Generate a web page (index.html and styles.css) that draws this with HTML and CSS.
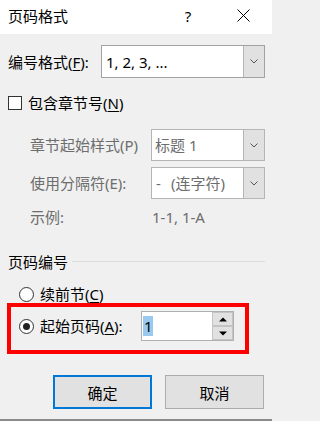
FILE: index.html
```html
<!DOCTYPE html>
<html lang="zh-CN">
<head>
<meta charset="utf-8">
<title>页码格式</title>
<link rel="stylesheet" href="styles.css">
</head>
<body>
<div class="dialog">
  <header class="titlebar">
    <span class="title">页码格式</span>
    <span class="help">?</span>
    <span class="close">
      <svg width="13" height="13" viewBox="0 0 13 13"><path d="M0.5 0.5 L12.5 12.5 M12.5 0.5 L0.5 12.5" stroke="#000" stroke-width="1" fill="none"/></svg>
    </span>
  </header>

  <main class="content">
    <div class="row row-format">
      <span class="label label-main">编号格式(<u>F</u>):</span>
      <div class="select select-main">
        <span class="select-text">1, 2, 3, ...</span>
        <span class="drop"><svg width="8" height="5" viewBox="0 0 8 5"><path d="M0.5 0.5 L4 4 L7.5 0.5" stroke="#555" fill="none"/></svg></span>
      </div>
    </div>

    <div class="row row-check">
      <span class="checkbox"></span>
      <span class="check-label">包含章节号(<u>N</u>)</span>
    </div>

    <div class="row row-sub row-sub1">
      <span class="label label-sub disabled">章节起始样式(P)</span>
      <div class="select select-sub">
        <span class="select-text disabled">标题 1</span>
        <span class="drop"><svg width="8" height="5" viewBox="0 0 8 5"><path d="M0.5 0.5 L4 4 L7.5 0.5" stroke="#555" fill="none"/></svg></span>
      </div>
    </div>

    <div class="row row-sub row-sub2">
      <span class="label label-sub disabled">使用分隔符(E):</span>
      <div class="select select-sub">
        <span class="select-text disabled"><span class="dash">-</span>(连字符)</span>
        <span class="drop"><svg width="8" height="5" viewBox="0 0 8 5"><path d="M0.5 0.5 L4 4 L7.5 0.5" stroke="#555" fill="none"/></svg></span>
      </div>
    </div>

    <div class="row row-example">
      <span class="label label-sub disabled">示例:</span>
      <span class="example disabled">1-1, 1-A</span>
    </div>

    <div class="row group-head">
      <span class="group-title">页码编号</span>
      <span class="group-line"></span>
    </div>

    <div class="row row-radio1">
      <span class="radio"></span>
      <span class="radio-label">续前节(<u>C</u>)</span>
    </div>

    <div class="highlight">
      <div class="row row-radio2">
        <span class="radio checked"></span>
        <span class="radio-label label-start">起始页码(<u>A</u>):</span>
        <div class="spin">
          <span class="spin-text"><span class="sel">1</span></span>
          <span class="spin-btns">
            <span class="spin-btn"><svg width="8" height="5" viewBox="0 0 8 5"><path d="M0 4.5 L4 0.5 L8 4.5 Z" fill="#000"/></svg></span>
            <span class="spin-btn"><svg width="8" height="5" viewBox="0 0 8 5"><path d="M0 0.5 L4 4.5 L8 0.5 Z" fill="#000"/></svg></span>
          </span>
        </div>
      </div>
    </div>

    <div class="buttons">
      <span class="btn btn-default">确定</span>
      <span class="btn">取消</span>
    </div>
  </main>
  <div class="bottom-line"></div>
</div>
</body>
</html>
```
FILE: styles.css
```css
* { box-sizing: border-box; }

html, body {
  margin: 0;
  padding: 0;
}

body {
  width: 272px;
  height: 421px;
  overflow: hidden;
  background: #f0f0f0;
  font-family: "Noto Sans", "Noto Sans CJK SC", sans-serif;
  font-size: 15px;
  color: #000;
}

.dialog {
  width: 272px;
  height: 421px;
  display: flex;
  flex-direction: column;
}

u { text-decoration: underline; text-underline-offset: 2px; text-decoration-thickness: 1px; }

.titlebar {
  height: 34px;
  background: #fff;
  display: flex;
  align-items: center;
  padding-left: 8px;
  line-height: 20px;
}

.title { flex: 1; margin-top: -2px; }

.help {
  width: 20px;
  text-align: center;
  margin-right: 39px;
  margin-top: -2px;
}

.close {
  width: 13px;
  height: 13px;
  margin-right: 22px;
  margin-top: -3px;
  display: flex;
}

.content {
  padding: 0 7px 0 8px;
  display: flex;
  flex-direction: column;
}

.row {
  display: flex;
  align-items: center;
  line-height: 20px;
}

.disabled { color: #6d6d6d; }

.row-format { margin-top: 11px; height: 33px; }

.label-main { width: 93px; }

.select {
  display: flex;
  align-items: stretch;
  background: #fff;
  border: 1px solid #a2a2a2;
}

.select-main { width: 164px; height: 33px; }

.select-sub { width: 114px; height: 32px; border-color: #b5b5b5; }

.select-text {
  flex: 1;
  display: flex;
  align-items: center;
  padding-left: 4px;
  white-space: pre;
}

.select-sub .select-text { padding-left: 3px; }

.dash { width: 16px; padding-left: 1px; }

.drop {
  width: 21px;
  background: #e1e1e1;
  border-left: 1px solid #b5b5b5;
  display: flex;
  align-items: center;
  justify-content: center;
}

.row-check { margin-top: 13px; height: 24px; }

.checkbox {
  width: 14px;
  height: 14px;
  border: 1px solid #333;
  background: #fff;
  margin-right: 6px;
}

.row-sub1 { margin-top: 14px; height: 32px; }
.row-sub2 { margin-top: 6px; height: 32px; }

.label-sub { width: 143px; padding-left: 22px; }

.row-example { margin-top: 8px; height: 20px; }
.example { padding-left: 1px; }

.group-head { margin-top: 25px; height: 20px; }
.group-title { margin-right: 4px; }
.group-line { flex: 1; height: 1px; background: #dcdcdc; margin-top: -2px; }

.row-radio1 { margin-top: 13px; height: 18px; padding-left: 11px; }

.radio {
  width: 15px;
  height: 15px;
  border: 1px solid #333;
  border-radius: 50%;
  background: #fff;
  margin-right: 6px;
  display: flex;
  align-items: center;
  justify-content: center;
}

.radio.checked::after {
  content: "";
  width: 7px;
  height: 7px;
  border-radius: 50%;
  background: #222;
}

.highlight {
  margin-left: -1px;
  width: 242px;
  height: 51px;
  border: 4px solid #ff0000;
  padding: 4px 0 0 8px;
}

.row-radio2 { height: 30px; }

.label-start { width: 101px; }

.spin {
  width: 93px;
  height: 30px;
  background: #fff;
  border: 1px solid #b0b0b0;
  display: flex;
}

.spin-text {
  flex: 1;
  display: flex;
  align-items: center;
  padding-left: 1px;
}

.sel {
  background: #99c9ef;
  height: 20px;
  width: 10px;
  line-height: 20px;
  padding-left: 1px;
}

.spin-btns {
  width: 21px;
  display: flex;
  flex-direction: column;
}

.spin-btn {
  flex: 1;
  background: #e1e1e1;
  border: 1px solid #c4c4c4;
  display: flex;
  align-items: center;
  justify-content: center;
}

.buttons {
  margin-top: 21px;
  display: flex;
  justify-content: flex-end;
  gap: 13px;
  padding-right: 1px;
}

.btn {
  width: 99px;
  height: 34px;
  background: #e1e1e1;
  border: 1px solid #adadad;
  display: flex;
  align-items: center;
  justify-content: center;
}

.btn-default { border: 2px solid #0078d7; }

.bottom-line {
  margin-top: auto;
  height: 2px;
  background: #8a8a8a;
}
```
